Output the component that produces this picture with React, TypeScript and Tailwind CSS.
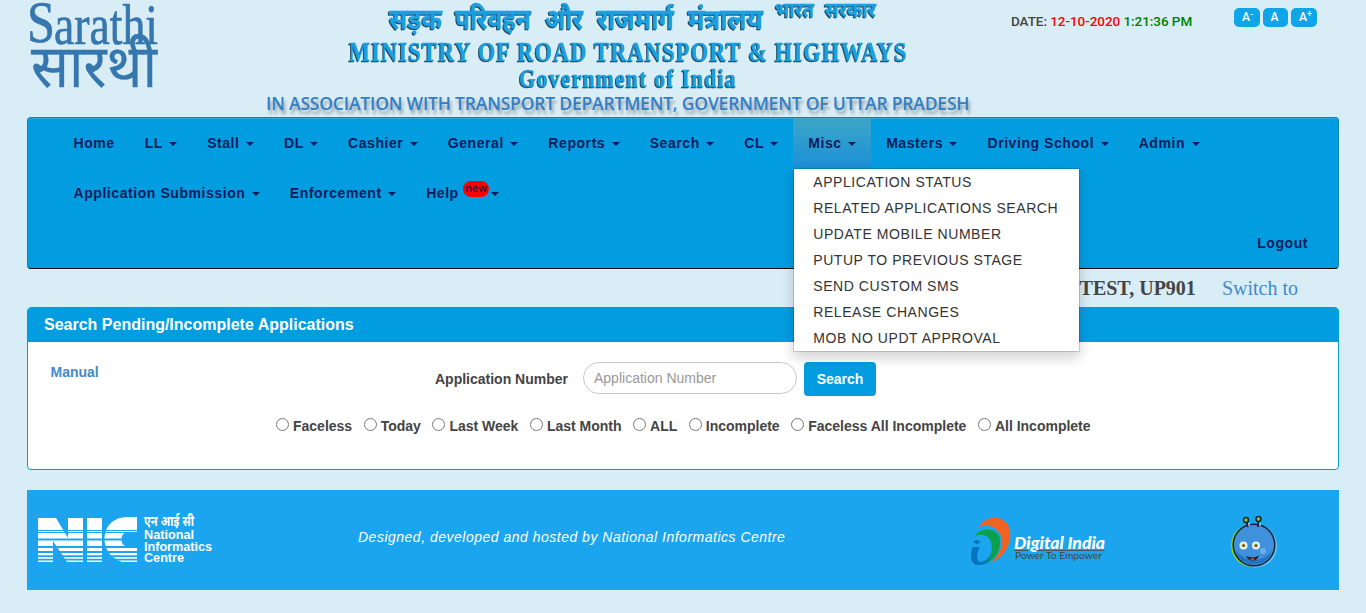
import React from "react";

const navFont = "font-['Liberation_Sans',Arial,sans-serif]";

function Caret() {
  return (
    <span className="ml-0.5 inline-block h-0 w-0 border-x-4 border-t-4 border-x-transparent border-t-[#0b1c5c] align-middle" />
  );
}

function SarathiLogo() {
  return (
    <svg className="block h-[92px] w-[132px] overflow-visible" viewBox="27 0 132 92" fill="none" stroke="#3577ae" strokeLinecap="round">
      <g fill="#3577ae" strokeWidth="0.700" fontFamily="'Liberation Serif', 'Times New Roman', serif">
        <text x="27" y="42" fontSize="60" textLength="28" lengthAdjust="spacingAndGlyphs">S</text>
        <text x="54" y="43.500" fontSize="58" textLength="104" lengthAdjust="spacingAndGlyphs">arathi</text>
      </g>
      <text x="31" y="86.500" fill="#3577ae" strokeWidth="0.300" fontSize="59" textLength="126" lengthAdjust="spacingAndGlyphs" fontFamily="'Noto Sans Devanagari', 'Noto Sans', sans-serif">सारथी</text>
    </svg>
  );
}

const hindiTitle: [string, number, number][] = [
  ["सड़क", 389, 53],
  ["परिवहन", 455, 76],
  ["और", 545, 38],
  ["राजमार्ग", 597, 77],
  ["मंत्रालय", 688, 75],
];

function MinistryBanner() {
  return (
    <svg
      className="block h-[92px] w-[564px] overflow-visible drop-shadow-[-1px_1px_0.7px_#1d4358]"
      viewBox="345 0 564 92"
      fill="#1ba0e2"
      stroke="#1ba0e2"
      strokeWidth="0.300"
      fontWeight="700"
    >
      <g fontFamily="'Noto Sans Devanagari', 'Noto Sans', sans-serif">
        {hindiTitle.map(([word, x, width]) => (
          <text key={word} x={x} y="29" fontSize="28" textLength={width} lengthAdjust="spacingAndGlyphs">{word}</text>
        ))}
        <text x="775" y="17" fontSize="21" textLength="39" lengthAdjust="spacingAndGlyphs">भारत</text>
        <text x="825" y="17" fontSize="21" textLength="51" lengthAdjust="spacingAndGlyphs">सरकार</text>
      </g>
      <g fontFamily="'Liberation Serif', 'Times New Roman', serif">
        <text x="349" y="60.500" fontSize="27" letterSpacing="1.5" textLength="559" lengthAdjust="spacingAndGlyphs">MINISTRY OF ROAD TRANSPORT &amp; HIGHWAYS</text>
        <text x="519" y="86.500" fontSize="26" letterSpacing="1.5" textLength="218" lengthAdjust="spacingAndGlyphs">Government of India</text>
      </g>
    </svg>
  );
}

function Header() {
  return (
    <header className="flex h-[117px] pl-[27px]">
      <SarathiLogo />
      <div className="ml-[106px] w-[705px] shrink-0">
        <div className="ml-20 w-[564px]"><MinistryBanner /></div>
        <div className="pl-px whitespace-nowrap font-['Open_Sans',sans-serif] text-[17.500px] leading-[22px] font-semibold tracking-[-0.190px] text-[#337ec4] [text-shadow:2px_4px_3px_rgba(0,0,0,0.3)]">
          IN ASSOCIATION WITH TRANSPORT DEPARTMENT, GOVERNMENT OF UTTAR PRADESH
        </div>
      </div>
      <div className="ml-[41px] w-[223px] shrink-0 pt-3 font-['Roboto',sans-serif] text-[13.500px] leading-[18px] font-medium tracking-[-0.060px] whitespace-nowrap text-[#444]">
        DATE: <span className="text-[#f00]">12-10-2020</span> <span className="text-[#008000]">1:21:36 PM</span>
      </div>
      <div className="flex gap-[3px] pt-2 font-['Roboto',sans-serif] text-xs leading-[19px] font-medium text-white">
        {["-", "", "+"].map((sign) => (
          <span key={sign} className="h-[19px] w-[25.500px] rounded-[5px] bg-[#0ea5e9] pl-2">
            A<sup className="text-[9px]">{sign}</sup>
          </span>
        ))}
      </div>
    </header>
  );
}

const miscItems = [
  "APPLICATION STATUS",
  "RELATED APPLICATIONS SEARCH",
  "UPDATE MOBILE NUMBER",
  "PUTUP TO PREVIOUS STAGE",
  "SEND CUSTOM SMS",
  "RELEASE CHANGES",
  "MOB NO UPDT APPROVAL",
];

function MiscMenu() {
  return (
    <ul className="absolute top-[50px] left-0 z-10 w-[287px] border border-black/15 bg-white bg-clip-padding text-sm font-normal tracking-[0.560px] text-[#333] shadow-[0_6px_12px_rgba(0,0,0,0.175)]">
      {miscItems.map((item) => (
        <li key={item} className="h-[26px] pl-[19px] leading-[26px] whitespace-nowrap">{item}</li>
      ))}
    </ul>
  );
}

function NavItem({ label }: { label: string }) {
  const open = label === "Misc";
  return (
    <li
      className={
        open
          ? "relative h-[50px] bg-linear-to-b from-[#3ba6c8] to-[#1c8fd6] px-[15px] leading-[50px] whitespace-nowrap"
          : "h-[50px] px-[15px] leading-[50px] whitespace-nowrap"
      }
    >
      {label}{" "}
      {label === "Help" && (
        <sup className="relative -top-[6px] inline-block h-4 w-[26px] rounded-lg bg-[#f00] text-center align-baseline text-[11px] leading-[15px] tracking-[0.2px] text-[#4a1030]">
          new
        </sup>
      )}
      {label !== "Home" && <Caret />}
      {open && <MiscMenu />}
    </li>
  );
}

const rowOne = ["Home", "LL", "Stall", "DL", "Cashier", "General", "Reports", "Search", "CL", "Misc", "Masters", "Driving School", "Admin"];
const rowTwo = ["Application Submission", "Enforcement", "Help"];

function NavBar() {
  return (
    <nav className="h-[152px] rounded border border-[#1580ba] border-b-[#08090a] bg-[#029de0] pl-[30.500px] text-sm font-bold tracking-[0.565px] text-[#0b1c5c] shadow-[inset_0_1px_0_#23aae6]">
      <ul className="flex">{rowOne.map((l) => <NavItem key={l} label={l} />)}</ul>
      <ul className="flex">{rowTwo.map((l) => <NavItem key={l} label={l} />)}</ul>
      <div className="pr-[30px] text-right leading-[50px]">Logout</div>
    </nav>
  );
}

const filters = ["Faceless", "Today", "Last Week", "Last Month", "ALL", "Incomplete", "Faceless All Incomplete", "All Incomplete"];

function SearchPanel() {
  return (
    <section className="h-[163px] overflow-hidden rounded border border-[#029de0] bg-white text-[#444]">
      <h2 className="h-[34px] bg-[#029de0] pl-4 text-base leading-[33px] font-bold text-white">Search Pending/Incomplete Applications</h2>
      <div className="flex h-[74px] pt-5 text-sm">
        <a className="w-[385px] pl-[22.500px] leading-5 font-bold text-[#428bca]">Manual</a>
        <label className="w-[148px] pl-[22px] pt-[7px] leading-5 font-bold whitespace-nowrap">Application Number</label>
        <input
          className="ml-[22px] h-8 w-[214px] rounded-2xl border border-[#c9c9c9] pl-2.5 text-sm placeholder:text-[#999]"
          placeholder="Application Number"
        />
        <button className="ml-[7px] h-[34px] w-[72px] rounded bg-[#029de0] font-bold text-white">Search</button>
      </div>
      <div className="flex pl-[248px] text-sm leading-5 font-bold">
        {filters.map((f) => (
          <label key={f} className="mr-[11.500px] flex shrink-0 whitespace-nowrap">
            <input type="radio" name="filter" className="mt-0.5 mr-1 h-[13px] w-[13px]" />
            {f}
          </label>
        ))}
      </div>
    </section>
  );
}

function NicLogo() {
  return (
    <svg className="block h-[56px] w-[180px] overflow-visible" viewBox="36 510 180 56" fill="#fff">
      <path d="M38 518H56L68 538V518H83V562H67L53 541V562H38ZM87 518H102V562H87Z" />
      <path d="M137 517V532H126C120 535 120 543 125 546H137V562H122C96 553 100 517 127 517Z" />
      <g stroke="#1ca5ef">
        <path d="M36 530.500H138" strokeWidth="1" />
        <path d="M36 532.500H138" strokeWidth="1" />
        <path d="M36 539.500H138M36 547H138" strokeWidth="2.200" />
        <path d="M36 552H138M36 556.200H138M36 559.700H138" strokeWidth="1.800" />
      </g>
      <g fontFamily="'Liberation Sans', 'Noto Sans Devanagari', sans-serif" fontWeight="700" fontSize="13">
        <text x="144" y="526" fontSize="14.500" textLength="50" lengthAdjust="spacingAndGlyphs">एन आई सी</text>
        <text x="144" y="539" textLength="50" lengthAdjust="spacingAndGlyphs">National</text>
        <text x="144" y="550.500" textLength="68" lengthAdjust="spacingAndGlyphs">Informatics</text>
        <text x="144" y="562" textLength="40" lengthAdjust="spacingAndGlyphs">Centre</text>
      </g>
    </svg>
  );
}

function DigitalIndiaLogo() {
  return (
    <svg className="block h-[52px] w-[140px]" viewBox="968 516 140 52">
      <path d="M979 527C984 516 1002 514 1008 525C1015 539 1005 558 991 562.500C1003 552 1005 538 997 530C992 525 985 525 979 527Z" fill="#f26322" />
      <path d="M975 536C980 528 994 527 999 536C1003 547 996 562 982 564.500C992 558 994 547 990 540C987 534 980 534 975 536Z" fill="#0c9f50" />
      <path d="M972.500 547H979.500C976 556 976 562 981 562C986 561 989 558 991 554C990 561 986 564.500 980 565C970 566 970 556 972.500 547Z" fill="#0873bd" />
      <path d="M973 541.500Q976.500 539 980.500 541.500L977 544.500Z" fill="#0873bd" />
      <text x="1014" y="548.500" fill="#fff" fontFamily="Lato, sans-serif" fontWeight="900" fontStyle="italic" fontSize="16.500" textLength="91" lengthAdjust="spacingAndGlyphs">Digital India</text>
      <path d="M1014 550.500H1028M1036 550.500H1104" stroke="#444" strokeWidth="0.800" />
      <text x="1015" y="559" fill="#444" fontFamily="Lato, sans-serif" fontSize="10" textLength="87" lengthAdjust="spacingAndGlyphs">Power To Empower</text>
    </svg>
  );
}

function Mascot() {
  return (
    <svg className="block h-[58px] w-[50px]" viewBox="1228 513 50 58">
      <circle cx="1252.500" cy="545.500" r="21.500" fill="#8cd81c" />
      <circle cx="1255.500" cy="546" r="21.500" fill="#6fc4f0" />
      <circle cx="1254" cy="545" r="20.800" fill="#3f91dc" stroke="#152334" strokeWidth="1.500" />
      <path d="M1235 550Q1252 569 1272 552Q1266 565 1253 564.500Q1239 563 1235 550Z" fill="#2373c3" />
      <path d="M1246 520L1248 527M1258.500 519L1258 527" stroke="#152334" strokeWidth="2" />
      <path d="M1249 523V526M1260 523V526" stroke="#fff" />
      <circle cx="1246" cy="520" r="2.500" fill="#8cc828" stroke="#152334" strokeWidth="1.500" />
      <circle cx="1258.500" cy="519" r="2.500" fill="#8cc828" stroke="#152334" strokeWidth="1.500" />
      <circle cx="1243.500" cy="545.500" r="4" fill="#e8f3f4" />
      <circle cx="1256" cy="545.500" r="4" fill="#e8f3f4" />
      <circle cx="1243.500" cy="545.500" r="1.500" fill="#26343a" stroke="#c5a83c" />
      <circle cx="1256" cy="545.500" r="1.500" fill="#26343a" stroke="#c5a83c" />
      <circle cx="1263" cy="551" r="3" fill="#6bb1ea" />
      <path d="M1246 556Q1253 559 1259 555.500Q1257 561 1252 560.500Q1248 560 1246 556Z" fill="#271c25" />
      <path d="M1250 559Q1253 557.500 1255 559L1252 560.500Z" fill="#cc4d3c" />
    </svg>
  );
}

function Footer() {
  return (
    <footer className="mt-5 flex h-[100px] bg-[#1ca5ef] pl-[9px]">
      <div className="w-[322px] shrink-0 pt-5"><NicLogo /></div>
      <p className="w-[610px] shrink-0 pt-[37px] text-sm leading-5 tracking-[0.500px] text-white italic">
        Designed, developed and hosted by National Informatics Centre
      </p>
      <div className="w-[260px] shrink-0 pt-[26px]"><DigitalIndiaLogo /></div>
      <div className="pt-[23px]"><Mascot /></div>
    </footer>
  );
}

export default function App() {
  return (
    <div className={`${navFont} h-[613px] overflow-hidden bg-[#d9edf7]`}>
      <Header />
      <main className="mx-[27px]">
        <NavBar />
        <div className="flex h-[38px] justify-end pr-[41px] font-['Liberation_Serif','Times_New_Roman',serif] text-xl leading-[39px]">
          <b className="mr-[26px] text-[#444]">TEST, UP901</b>
          <a className="text-[#428bca]">Switch to</a>
        </div>
        <SearchPanel />
        <Footer />
      </main>
    </div>
  );
}
